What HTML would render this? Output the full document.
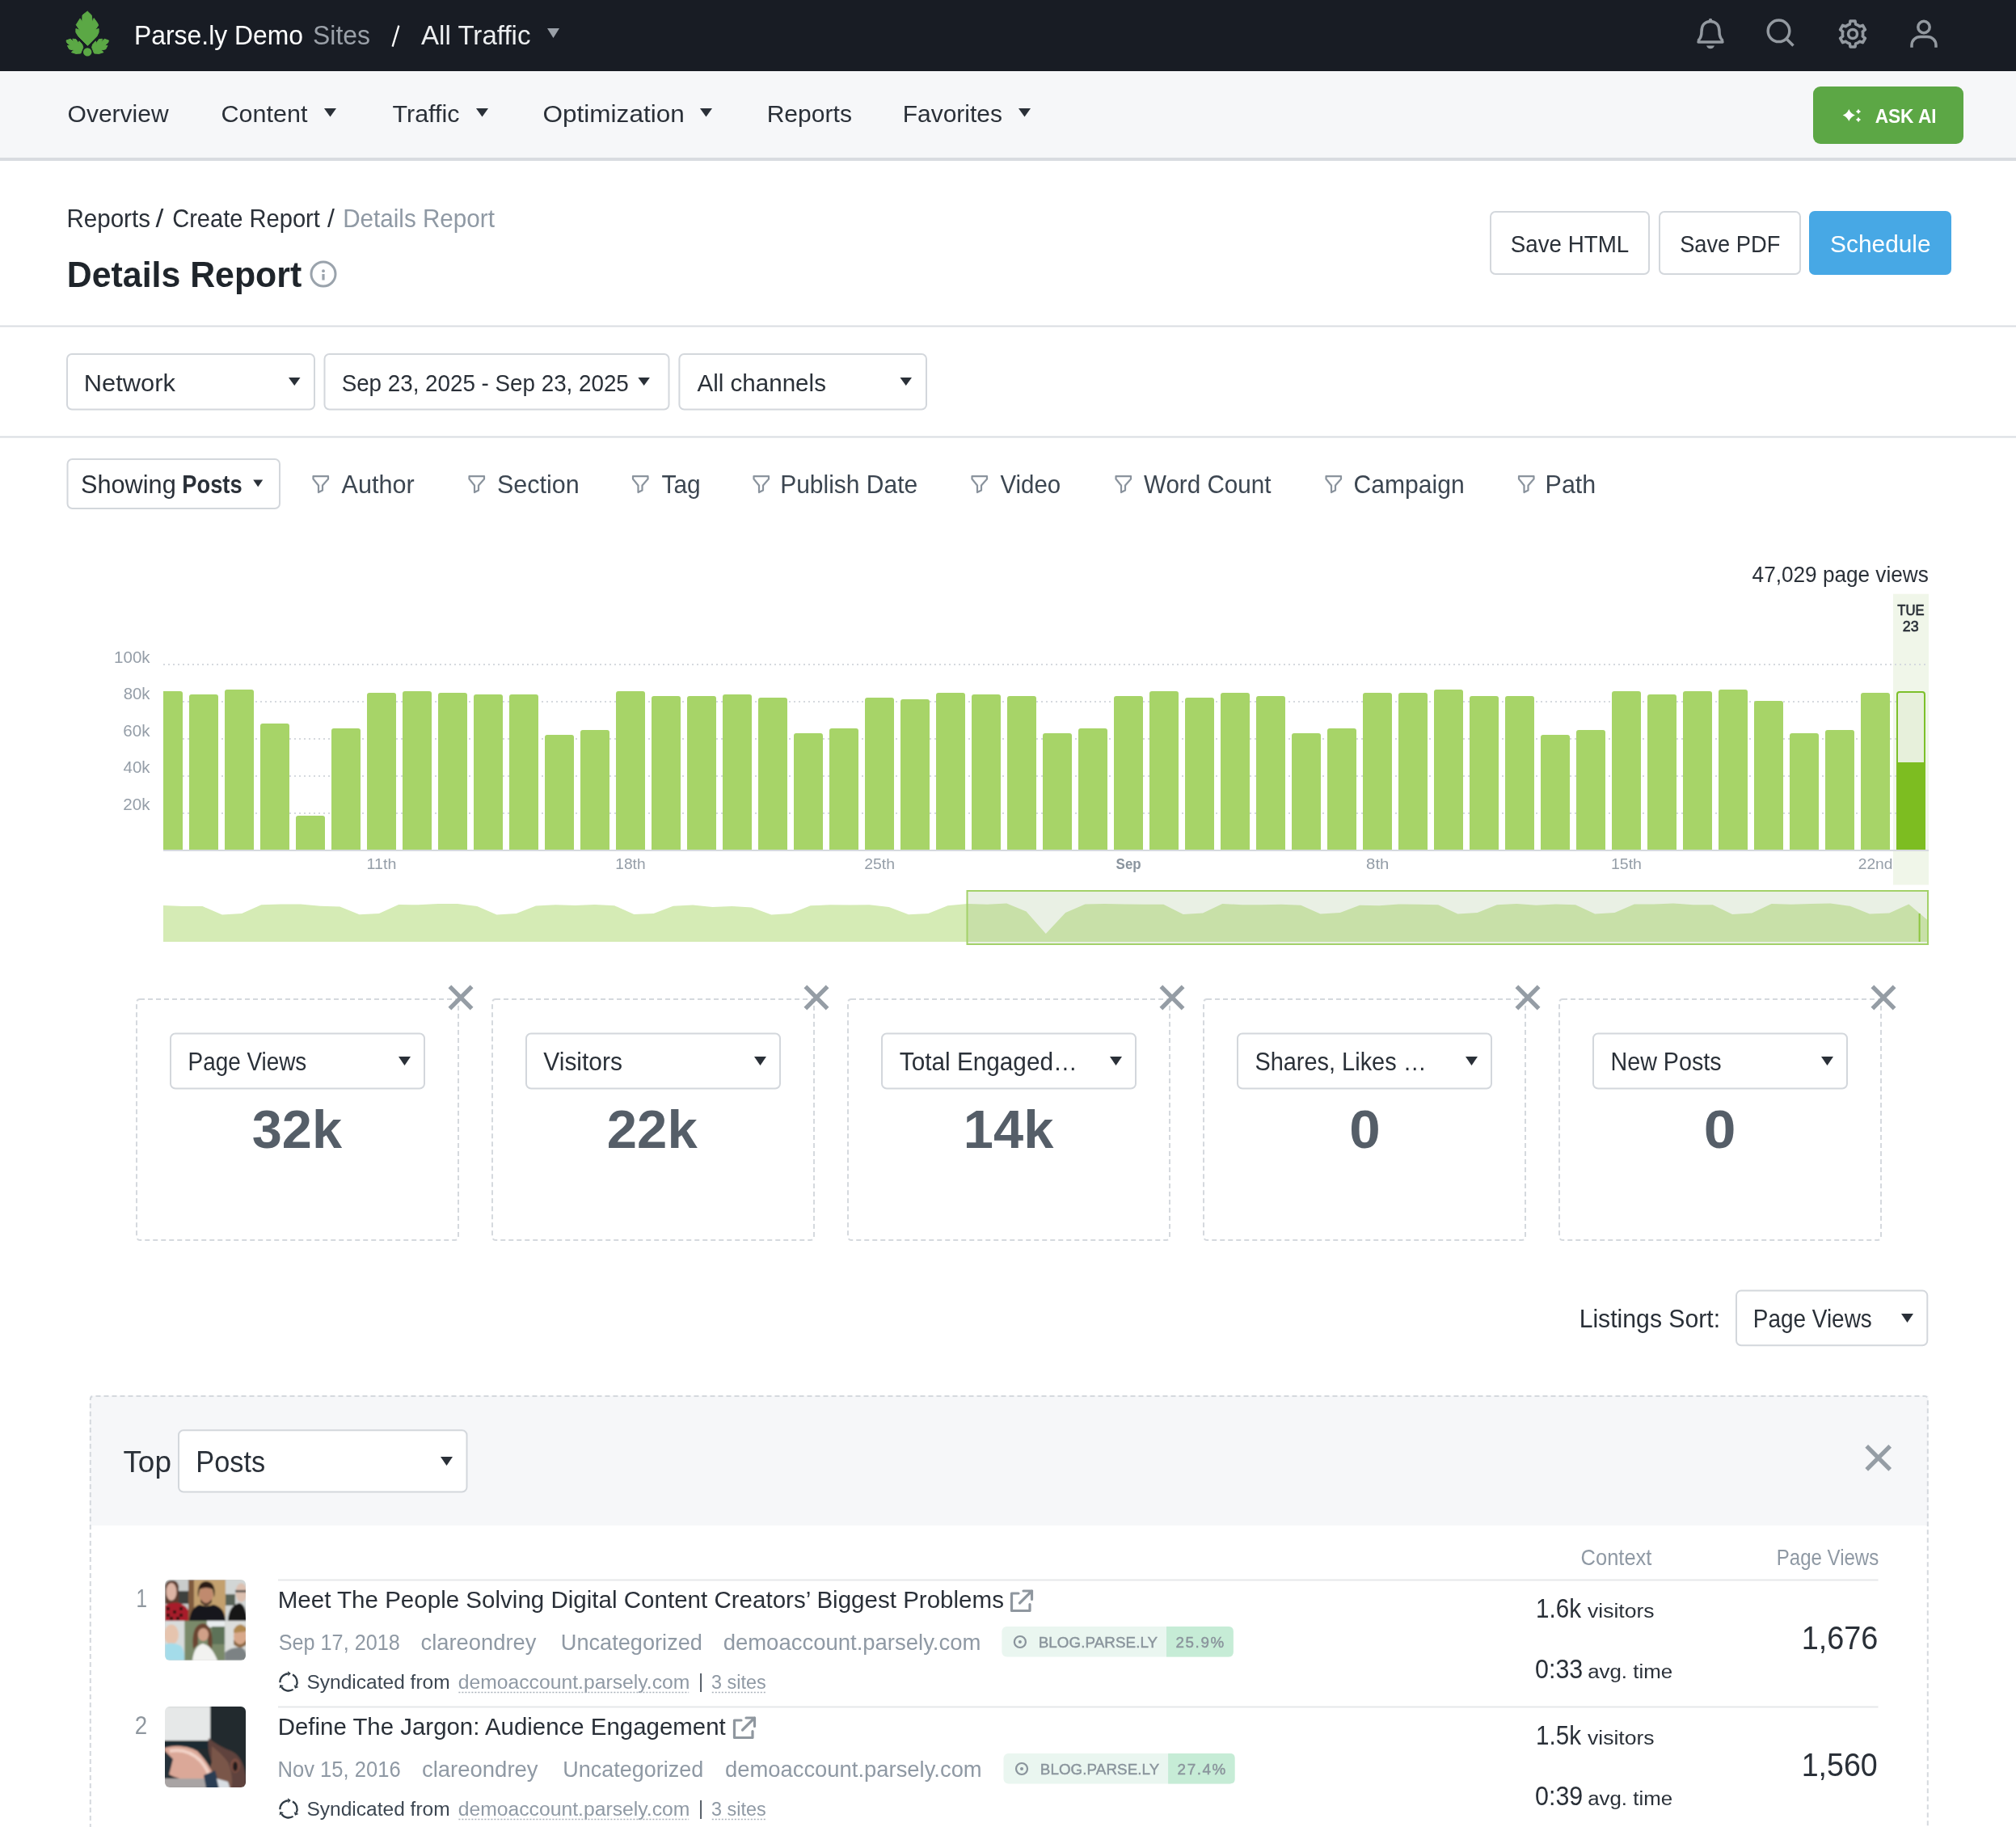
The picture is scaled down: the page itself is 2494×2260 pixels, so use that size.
<!DOCTYPE html>
<html><head><meta charset="utf-8"><title>Details Report</title>
<style>html,body{margin:0;padding:0;background:#fff;} body{width:2494px;height:2260px;overflow:hidden;font-family:"Liberation Sans",sans-serif;} svg{display:block;will-change:transform;} text{white-space:pre;}</style>
</head><body>
<svg width="2494" height="2260" viewBox="0 0 2494 2260">
<rect x="0" y="0" width="2494" height="88" fill="#181c24" />
<polygon points="108.2,13.9 113.2,18.8 114.3,27.3 116.2,22.5 120.7,28.8 121.6,31.4 117.7,37.0 122.1,35.5 122.1,40.0 119.9,44.8 108.4,56.4 96.8,44.8 93.9,40.0 93.9,35.5 98.7,37.4 94.2,30.7 99.1,22.9 101.7,27.3 102.0,18.8" fill="#5ba845" stroke="#5ba845" stroke-width="1" stroke-linejoin="round"/>
<polygon points="82.0,50.0 87.2,48.2 91.3,52.3 89.8,48.2 93.9,48.6 97.2,53.4 98.0,50.8 101.7,54.9 102.8,58.6 99.8,66.0 93.9,66.4 88.3,64.6 91.6,62.3 85.7,60.8 83.4,56.4 87.2,56.7 82.7,52.7" fill="#5ba845" stroke="#5ba845" stroke-width="1" stroke-linejoin="round"/>
<polygon points="134.4,50.0 129.2,48.2 125.1,52.3 126.6,48.2 122.5,48.6 119.2,53.4 118.4,50.8 114.7,54.9 113.6,58.6 116.6,66.0 122.5,66.4 128.1,64.6 124.8,62.3 130.7,60.8 133.0,56.4 129.2,56.7 133.7,52.7" fill="#5ba845" stroke="#5ba845" stroke-width="1" stroke-linejoin="round"/>
<circle cx="108.2" cy="64.4" r="5.2" fill="#5ba845"/>
<text x="166.01" y="55" font-family="Liberation Sans" font-size="33.42" font-weight="400" fill="#ffffff" textLength="209.08" lengthAdjust="spacingAndGlyphs" >Parse.ly Demo</text>
<text x="387.00" y="55" font-family="Liberation Sans" font-size="34.13" font-weight="400" fill="#9aa0a8" textLength="71.00" lengthAdjust="spacingAndGlyphs" >Sites</text>
<line x1="485.6" y1="57.6" x2="493.4" y2="31.6" stroke="#ffffff" stroke-width="2.3"/>
<text x="521.00" y="55" font-family="Liberation Sans" font-size="34.13" font-weight="400" fill="#eceef0" textLength="135.51" lengthAdjust="spacingAndGlyphs" >All Traffic</text>
<polygon points="677,35 692,35 684.5,47" fill="#9aa0a8"/>
<path d="M2101,52 L2131,52 M2101.5,52 L2101.5,49.5 C2104,47 2105,45 2105,39 C2105,31 2109.5,26.5 2116,26.5 C2122.5,26.5 2127,31 2127,39 C2127,45 2128,47 2130.5,49.5 L2130.5,52" fill="none" stroke="#9399a0" stroke-width="3.5" stroke-linejoin="round" stroke-linecap="round"/>
<circle cx="2116" cy="25" r="2.2" fill="#9399a0"/>
<path d="M2111,56.5 L2121,56.5 C2120,59.2 2118,60.3 2116,60.3 C2114,60.3 2112,59.2 2111,56.5Z" fill="#9399a0"/>
<circle cx="2200.5" cy="38.3" r="13.3" fill="none" stroke="#9399a0" stroke-width="3.5"/>
<line x1="2210" y1="48" x2="2218.5" y2="56.5" stroke="#9399a0" stroke-width="3.5" stroke-linecap="butt"/>
<path d="M2288.32,29.95 L2289.03,25.97 L2294.97,25.97 L2295.68,29.95 A12.6,12.6 0 0 1 2300.59,32.78 L2304.39,31.41 L2307.37,36.56 L2304.28,39.17 A12.6,12.6 0 0 1 2304.28,44.83 L2307.37,47.44 L2304.39,52.59 L2300.59,51.22 A12.6,12.6 0 0 1 2295.68,54.05 L2294.97,58.03 L2289.03,58.03 L2288.32,54.05 A12.6,12.6 0 0 1 2283.41,51.22 L2279.61,52.59 L2276.63,47.44 L2279.72,44.83 A12.6,12.6 0 0 1 2279.72,39.17 L2276.63,36.56 L2279.61,31.41 L2283.41,32.78 A12.6,12.6 0 0 1 2288.32,29.95Z" fill="none" stroke="#9399a0" stroke-width="3.6" stroke-linejoin="round"/>
<circle cx="2292" cy="42" r="5.5" fill="none" stroke="#9399a0" stroke-width="3.5"/>
<circle cx="2380" cy="33.5" r="7.2" fill="none" stroke="#9399a0" stroke-width="3.5"/>
<path d="M2365,58.8 L2365,56 C2365,50 2369.5,45.6 2376,45.6 L2384,45.6 C2390.5,45.6 2395,50 2395,56 L2395,58.8" fill="none" stroke="#9399a0" stroke-width="3.5"/>
<rect x="0" y="88" width="2494" height="107" fill="#f6f7f9" />
<rect x="0" y="195" width="2494" height="4" fill="#d9dce0" />
<text x="83.59" y="151" font-family="Liberation Sans" font-size="29.87" font-weight="400" fill="#2a3038" textLength="125.04" lengthAdjust="spacingAndGlyphs" >Overview</text>
<text x="273.57" y="151" font-family="Liberation Sans" font-size="29.87" font-weight="400" fill="#2a3038" textLength="106.83" lengthAdjust="spacingAndGlyphs" >Content</text>
<polygon points="401,134 416,134 408.5,144.5" fill="#2a3038"/>
<text x="485.52" y="151" font-family="Liberation Sans" font-size="29.87" font-weight="400" fill="#2a3038" textLength="82.95" lengthAdjust="spacingAndGlyphs" >Traffic</text>
<polygon points="589,134 604,134 596.5,144.5" fill="#2a3038"/>
<text x="671.52" y="151" font-family="Liberation Sans" font-size="29.87" font-weight="400" fill="#2a3038" textLength="175.25" lengthAdjust="spacingAndGlyphs" >Optimization</text>
<polygon points="866,134 881,134 873.5,144.5" fill="#2a3038"/>
<text x="948.65" y="151" font-family="Liberation Sans" font-size="29.87" font-weight="400" fill="#2a3038" textLength="105.29" lengthAdjust="spacingAndGlyphs" >Reports</text>
<text x="1116.66" y="151" font-family="Liberation Sans" font-size="29.87" font-weight="400" fill="#2a3038" textLength="123.28" lengthAdjust="spacingAndGlyphs" >Favorites</text>
<polygon points="1260,134 1275,134 1267.5,144.5" fill="#2a3038"/>
<rect x="2243" y="107" width="186" height="71" fill="#5ca745" rx="9" />
<path d="M2287.3,134.9 Q2289.4280000000003,140.372 2294.9,142.5 Q2289.4280000000003,144.628 2287.3,150.1 Q2285.172,144.628 2279.7000000000003,142.5 Q2285.172,140.372 2287.3,134.9Z" fill="#fff"/>
<path d="M2299,134.70000000000002 Q2299.896,137.00400000000002 2302.2,137.9 Q2299.896,138.796 2299,141.1 Q2298.104,138.796 2295.8,137.9 Q2298.104,137.00400000000002 2299,134.70000000000002Z" fill="#fff"/>
<path d="M2299,144.8 Q2299.896,147.104 2302.2,148 Q2299.896,148.896 2299,151.2 Q2298.104,148.896 2295.8,148 Q2298.104,147.104 2299,144.8Z" fill="#fff"/>
<text x="2319.65" y="152" font-family="Liberation Sans" font-size="24.18" font-weight="700" fill="#ffffff" textLength="75.97" lengthAdjust="spacingAndGlyphs" >ASK AI</text>
<text x="82.44" y="280.5" font-family="Liberation Sans" font-size="30.44" font-weight="400" fill="#2a3038" textLength="103.48" lengthAdjust="spacingAndGlyphs" >Reports</text>
<text x="192.50" y="280.5" font-family="Liberation Sans" font-size="30.44" font-weight="400" fill="#2a3038" textLength="9.88" lengthAdjust="spacingAndGlyphs" >/</text>
<text x="213.14" y="280.5" font-family="Liberation Sans" font-size="30.44" font-weight="400" fill="#2a3038" textLength="182.76" lengthAdjust="spacingAndGlyphs" >Create Report</text>
<text x="405.00" y="280.5" font-family="Liberation Sans" font-size="30.44" font-weight="400" fill="#2a3038" textLength="8.89" lengthAdjust="spacingAndGlyphs" >/</text>
<text x="424.19" y="280.5" font-family="Liberation Sans" font-size="30.44" font-weight="400" fill="#8f99a4" textLength="187.71" lengthAdjust="spacingAndGlyphs" >Details Report</text>
<text x="82.82" y="354.8" font-family="Liberation Sans" font-size="44.80" font-weight="700" fill="#1f252b" textLength="290.39" lengthAdjust="spacingAndGlyphs" >Details Report</text>
<circle cx="400" cy="339" r="15" fill="none" stroke="#9aa3ac" stroke-width="3"/>
<rect x="398.4" y="339" width="3.2" height="7.5" fill="#9aa3ac"/>
<circle cx="400" cy="335.2" r="1.9" fill="#9aa3ac"/>
<rect x="1844" y="262" width="196" height="77" fill="#fff" rx="6" stroke="#d3d7dc" stroke-width="2" />
<text x="1868.73" y="312" font-family="Liberation Sans" font-size="29.87" font-weight="400" fill="#2a3038" textLength="146.56" lengthAdjust="spacingAndGlyphs" >Save HTML</text>
<rect x="2053" y="262" width="174" height="77" fill="#fff" rx="6" stroke="#d3d7dc" stroke-width="2" />
<text x="2078.15" y="312" font-family="Liberation Sans" font-size="29.87" font-weight="400" fill="#2a3038" textLength="124.24" lengthAdjust="spacingAndGlyphs" >Save PDF</text>
<rect x="2238" y="261" width="176" height="79" fill="#47a8e5" rx="7" />
<text x="2264.07" y="312" font-family="Liberation Sans" font-size="29.87" font-weight="400" fill="#ffffff" textLength="124.54" lengthAdjust="spacingAndGlyphs" >Schedule</text>
<rect x="0" y="402.5" width="2494" height="2" fill="#d9dde2" />
<rect x="83" y="438" width="306" height="68.5" fill="#fff" rx="6" stroke="#d3d7dc" stroke-width="2" />
<polygon points="357,467 371.5,467 364.25,477" fill="#2a3038"/>
<text x="103.79" y="484" font-family="Liberation Sans" font-size="30.15" font-weight="400" fill="#2a3038" textLength="113.23" lengthAdjust="spacingAndGlyphs" >Network</text>
<rect x="401.5" y="438" width="426.0" height="68.5" fill="#fff" rx="6" stroke="#d3d7dc" stroke-width="2" />
<polygon points="789.4,467 803.9,467 796.65,477" fill="#2a3038"/>
<text x="422.63" y="484" font-family="Liberation Sans" font-size="30.15" font-weight="400" fill="#2a3038" textLength="355.19" lengthAdjust="spacingAndGlyphs" >Sep 23, 2025 - Sep 23, 2025</text>
<rect x="840.4" y="438" width="305.6" height="68.5" fill="#fff" rx="6" stroke="#d3d7dc" stroke-width="2" />
<polygon points="1113.5,467 1128.0,467 1120.75,477" fill="#2a3038"/>
<text x="862.50" y="484" font-family="Liberation Sans" font-size="30.15" font-weight="400" fill="#2a3038" textLength="159.42" lengthAdjust="spacingAndGlyphs" >All channels</text>
<rect x="0" y="539.5" width="2494" height="2" fill="#d9dde2" />
<rect x="83.5" y="568" width="262.5" height="61" fill="#fff" rx="6" stroke="#d3d7dc" stroke-width="2" />
<polygon points="313.2,593.6 325.2,593.6 319.2,602.2" fill="#2a3038"/>
<text x="100.04" y="610.3" font-family="Liberation Sans" font-size="30.72" font-weight="400" fill="#2a3038" textLength="117.68" lengthAdjust="spacingAndGlyphs" >Showing</text>
<text x="225.29" y="610.3" font-family="Liberation Sans" font-size="30.72" font-weight="700" fill="#2a3038" textLength="74.31" lengthAdjust="spacingAndGlyphs" >Posts</text>
<path d="M387.5,589.2 L406,589.2 L406,592.5 L399,600.5 L399,606.5 L394,609 L394,600.5 L387.5,592.5 Z" fill="none" stroke="#8a939d" stroke-width="2.2" stroke-linejoin="round"/>
<text x="422.50" y="610.3" font-family="Liberation Sans" font-size="30.72" font-weight="400" fill="#3c4651" textLength="90.15" lengthAdjust="spacingAndGlyphs" >Author</text>
<path d="M580.5,589.2 L599,589.2 L599,592.5 L592,600.5 L592,606.5 L587,609 L587,600.5 L580.5,592.5 Z" fill="none" stroke="#8a939d" stroke-width="2.2" stroke-linejoin="round"/>
<text x="615.05" y="610.3" font-family="Liberation Sans" font-size="30.72" font-weight="400" fill="#3c4651" textLength="101.66" lengthAdjust="spacingAndGlyphs" >Section</text>
<path d="M783.0,589.2 L801.5,589.2 L801.5,592.5 L794.5,600.5 L794.5,606.5 L789.5,609 L789.5,600.5 L783.0,592.5 Z" fill="none" stroke="#8a939d" stroke-width="2.2" stroke-linejoin="round"/>
<text x="818.53" y="610.3" font-family="Liberation Sans" font-size="30.72" font-weight="400" fill="#3c4651" textLength="48.14" lengthAdjust="spacingAndGlyphs" >Tag</text>
<path d="M932.5,589.2 L951,589.2 L951,592.5 L944,600.5 L944,606.5 L939,609 L939,600.5 L932.5,592.5 Z" fill="none" stroke="#8a939d" stroke-width="2.2" stroke-linejoin="round"/>
<text x="965.16" y="610.3" font-family="Liberation Sans" font-size="30.72" font-weight="400" fill="#3c4651" textLength="170.06" lengthAdjust="spacingAndGlyphs" >Publish Date</text>
<path d="M1202.5,589.2 L1221,589.2 L1221,592.5 L1214,600.5 L1214,606.5 L1209,609 L1209,600.5 L1202.5,592.5 Z" fill="none" stroke="#8a939d" stroke-width="2.2" stroke-linejoin="round"/>
<text x="1237.50" y="610.3" font-family="Liberation Sans" font-size="30.72" font-weight="400" fill="#3c4651" textLength="74.69" lengthAdjust="spacingAndGlyphs" >Video</text>
<path d="M1380.5,589.2 L1399,589.2 L1399,592.5 L1392,600.5 L1392,606.5 L1387,609 L1387,600.5 L1380.5,592.5 Z" fill="none" stroke="#8a939d" stroke-width="2.2" stroke-linejoin="round"/>
<text x="1415.00" y="610.3" font-family="Liberation Sans" font-size="30.72" font-weight="400" fill="#3c4651" textLength="157.40" lengthAdjust="spacingAndGlyphs" >Word Count</text>
<path d="M1640.5,589.2 L1659,589.2 L1659,592.5 L1652,600.5 L1652,606.5 L1647,609 L1647,600.5 L1640.5,592.5 Z" fill="none" stroke="#8a939d" stroke-width="2.2" stroke-linejoin="round"/>
<text x="1674.59" y="610.3" font-family="Liberation Sans" font-size="30.72" font-weight="400" fill="#3c4651" textLength="137.10" lengthAdjust="spacingAndGlyphs" >Campaign</text>
<path d="M1879.0,589.2 L1897.5,589.2 L1897.5,592.5 L1890.5,600.5 L1890.5,606.5 L1885.5,609 L1885.5,600.5 L1879.0,592.5 Z" fill="none" stroke="#8a939d" stroke-width="2.2" stroke-linejoin="round"/>
<text x="1911.62" y="610.3" font-family="Liberation Sans" font-size="30.72" font-weight="400" fill="#3c4651" textLength="62.59" lengthAdjust="spacingAndGlyphs" >Path</text>
<text x="2167.59" y="719.9" font-family="Liberation Sans" font-size="27.02" font-weight="400" fill="#2a3038" textLength="218.23" lengthAdjust="spacingAndGlyphs" >47,029 page views</text>
<rect x="2342" y="734.7" width="44" height="359.8" fill="#f0f6e9" />
<text x="2347.34" y="761" font-family="Liberation Sans" font-size="18.77" font-weight="400" fill="#2a3038" textLength="33.36" lengthAdjust="spacingAndGlyphs" stroke="#2a3038" stroke-width="0.6">TUE</text>
<text x="2353.86" y="781" font-family="Liberation Sans" font-size="18.77" font-weight="400" fill="#2a3038" textLength="19.86" lengthAdjust="spacingAndGlyphs" stroke="#2a3038" stroke-width="0.6">23</text>
<line x1="202" y1="822" x2="2386" y2="822" stroke="#d5d9de" stroke-width="2" stroke-dasharray="2 4"/>
<line x1="202" y1="868" x2="2386" y2="868" stroke="#d5d9de" stroke-width="2" stroke-dasharray="2 4"/>
<line x1="202" y1="914" x2="2386" y2="914" stroke="#d5d9de" stroke-width="2" stroke-dasharray="2 4"/>
<line x1="202" y1="960" x2="2386" y2="960" stroke="#d5d9de" stroke-width="2" stroke-dasharray="2 4"/>
<line x1="202" y1="1006" x2="2386" y2="1006" stroke="#d5d9de" stroke-width="2" stroke-dasharray="2 4"/>
<text x="141.12" y="820.1" font-family="Liberation Sans" font-size="20.34" font-weight="400" fill="#959ea8" textLength="44.46" lengthAdjust="spacingAndGlyphs" >100k</text>
<text x="152.66" y="864.8" font-family="Liberation Sans" font-size="20.34" font-weight="400" fill="#959ea8" textLength="32.92" lengthAdjust="spacingAndGlyphs" >80k</text>
<text x="152.33" y="910.9" font-family="Liberation Sans" font-size="20.34" font-weight="400" fill="#959ea8" textLength="33.24" lengthAdjust="spacingAndGlyphs" >60k</text>
<text x="152.48" y="956.1" font-family="Liberation Sans" font-size="20.34" font-weight="400" fill="#959ea8" textLength="33.10" lengthAdjust="spacingAndGlyphs" >40k</text>
<text x="152.33" y="1001.7" font-family="Liberation Sans" font-size="20.34" font-weight="400" fill="#959ea8" textLength="33.24" lengthAdjust="spacingAndGlyphs" >20k</text>
<path d="M202,1051 L202,855 L223,855 Q226,855 226,858 L226,1051 Z" fill="#a7d468"/>
<path d="M234,1051 L234,862 Q234,859 237,859 L267,859 Q270,859 270,862 L270,1051 Z" fill="#a7d468"/>
<path d="M278,1051 L278,856 Q278,853 281,853 L311,853 Q314,853 314,856 L314,1051 Z" fill="#a7d468"/>
<path d="M322,1051 L322,898 Q322,895 325,895 L355,895 Q358,895 358,898 L358,1051 Z" fill="#a7d468"/>
<path d="M366,1051 L366,1012 Q366,1009 369,1009 L399,1009 Q402,1009 402,1012 L402,1051 Z" fill="#a7d468"/>
<path d="M410,1051 L410,904 Q410,901 413,901 L443,901 Q446,901 446,904 L446,1051 Z" fill="#a7d468"/>
<path d="M454,1051 L454,860 Q454,857 457,857 L487,857 Q490,857 490,860 L490,1051 Z" fill="#a7d468"/>
<path d="M498,1051 L498,858 Q498,855 501,855 L531,855 Q534,855 534,858 L534,1051 Z" fill="#a7d468"/>
<path d="M542,1051 L542,860 Q542,857 545,857 L575,857 Q578,857 578,860 L578,1051 Z" fill="#a7d468"/>
<path d="M586,1051 L586,862 Q586,859 589,859 L619,859 Q622,859 622,862 L622,1051 Z" fill="#a7d468"/>
<path d="M630,1051 L630,862 Q630,859 633,859 L663,859 Q666,859 666,862 L666,1051 Z" fill="#a7d468"/>
<path d="M674,1051 L674,912 Q674,909 677,909 L707,909 Q710,909 710,912 L710,1051 Z" fill="#a7d468"/>
<path d="M718,1051 L718,906 Q718,903 721,903 L751,903 Q754,903 754,906 L754,1051 Z" fill="#a7d468"/>
<path d="M762,1051 L762,858 Q762,855 765,855 L795,855 Q798,855 798,858 L798,1051 Z" fill="#a7d468"/>
<path d="M806,1051 L806,864 Q806,861 809,861 L839,861 Q842,861 842,864 L842,1051 Z" fill="#a7d468"/>
<path d="M850,1051 L850,864 Q850,861 853,861 L883,861 Q886,861 886,864 L886,1051 Z" fill="#a7d468"/>
<path d="M894,1051 L894,862 Q894,859 897,859 L927,859 Q930,859 930,862 L930,1051 Z" fill="#a7d468"/>
<path d="M938,1051 L938,866 Q938,863 941,863 L971,863 Q974,863 974,866 L974,1051 Z" fill="#a7d468"/>
<path d="M982,1051 L982,910 Q982,907 985,907 L1015,907 Q1018,907 1018,910 L1018,1051 Z" fill="#a7d468"/>
<path d="M1026,1051 L1026,904 Q1026,901 1029,901 L1059,901 Q1062,901 1062,904 L1062,1051 Z" fill="#a7d468"/>
<path d="M1070,1051 L1070,866 Q1070,863 1073,863 L1103,863 Q1106,863 1106,866 L1106,1051 Z" fill="#a7d468"/>
<path d="M1114,1051 L1114,868 Q1114,865 1117,865 L1147,865 Q1150,865 1150,868 L1150,1051 Z" fill="#a7d468"/>
<path d="M1158,1051 L1158,860 Q1158,857 1161,857 L1191,857 Q1194,857 1194,860 L1194,1051 Z" fill="#a7d468"/>
<path d="M1202,1051 L1202,862 Q1202,859 1205,859 L1235,859 Q1238,859 1238,862 L1238,1051 Z" fill="#a7d468"/>
<path d="M1246,1051 L1246,864 Q1246,861 1249,861 L1279,861 Q1282,861 1282,864 L1282,1051 Z" fill="#a7d468"/>
<path d="M1290,1051 L1290,910 Q1290,907 1293,907 L1323,907 Q1326,907 1326,910 L1326,1051 Z" fill="#a7d468"/>
<path d="M1334,1051 L1334,904 Q1334,901 1337,901 L1367,901 Q1370,901 1370,904 L1370,1051 Z" fill="#a7d468"/>
<path d="M1378,1051 L1378,864 Q1378,861 1381,861 L1411,861 Q1414,861 1414,864 L1414,1051 Z" fill="#a7d468"/>
<path d="M1422,1051 L1422,858 Q1422,855 1425,855 L1455,855 Q1458,855 1458,858 L1458,1051 Z" fill="#a7d468"/>
<path d="M1466,1051 L1466,866 Q1466,863 1469,863 L1499,863 Q1502,863 1502,866 L1502,1051 Z" fill="#a7d468"/>
<path d="M1510,1051 L1510,860 Q1510,857 1513,857 L1543,857 Q1546,857 1546,860 L1546,1051 Z" fill="#a7d468"/>
<path d="M1554,1051 L1554,864 Q1554,861 1557,861 L1587,861 Q1590,861 1590,864 L1590,1051 Z" fill="#a7d468"/>
<path d="M1598,1051 L1598,910 Q1598,907 1601,907 L1631,907 Q1634,907 1634,910 L1634,1051 Z" fill="#a7d468"/>
<path d="M1642,1051 L1642,904 Q1642,901 1645,901 L1675,901 Q1678,901 1678,904 L1678,1051 Z" fill="#a7d468"/>
<path d="M1686,1051 L1686,860 Q1686,857 1689,857 L1719,857 Q1722,857 1722,860 L1722,1051 Z" fill="#a7d468"/>
<path d="M1730,1051 L1730,860 Q1730,857 1733,857 L1763,857 Q1766,857 1766,860 L1766,1051 Z" fill="#a7d468"/>
<path d="M1774,1051 L1774,856 Q1774,853 1777,853 L1807,853 Q1810,853 1810,856 L1810,1051 Z" fill="#a7d468"/>
<path d="M1818,1051 L1818,864 Q1818,861 1821,861 L1851,861 Q1854,861 1854,864 L1854,1051 Z" fill="#a7d468"/>
<path d="M1862,1051 L1862,864 Q1862,861 1865,861 L1895,861 Q1898,861 1898,864 L1898,1051 Z" fill="#a7d468"/>
<path d="M1906,1051 L1906,912 Q1906,909 1909,909 L1939,909 Q1942,909 1942,912 L1942,1051 Z" fill="#a7d468"/>
<path d="M1950,1051 L1950,906 Q1950,903 1953,903 L1983,903 Q1986,903 1986,906 L1986,1051 Z" fill="#a7d468"/>
<path d="M1994,1051 L1994,858 Q1994,855 1997,855 L2027,855 Q2030,855 2030,858 L2030,1051 Z" fill="#a7d468"/>
<path d="M2038,1051 L2038,862 Q2038,859 2041,859 L2071,859 Q2074,859 2074,862 L2074,1051 Z" fill="#a7d468"/>
<path d="M2082,1051 L2082,858 Q2082,855 2085,855 L2115,855 Q2118,855 2118,858 L2118,1051 Z" fill="#a7d468"/>
<path d="M2126,1051 L2126,856 Q2126,853 2129,853 L2159,853 Q2162,853 2162,856 L2162,1051 Z" fill="#a7d468"/>
<path d="M2170,1051 L2170,870 Q2170,867 2173,867 L2203,867 Q2206,867 2206,870 L2206,1051 Z" fill="#a7d468"/>
<path d="M2214,1051 L2214,910 Q2214,907 2217,907 L2247,907 Q2250,907 2250,910 L2250,1051 Z" fill="#a7d468"/>
<path d="M2258,1051 L2258,906 Q2258,903 2261,903 L2291,903 Q2294,903 2294,906 L2294,1051 Z" fill="#a7d468"/>
<path d="M2302,1051 L2302,860 Q2302,857 2305,857 L2335,857 Q2338,857 2338,860 L2338,1051 Z" fill="#a7d468"/>
<path d="M2347,1051 L2347,859 Q2347,856 2350,856 L2378,856 Q2381,856 2381,859 L2381,1051 Z" fill="#e7f0db" stroke="#7cc02a" stroke-width="2"/>
<rect x="2346" y="943" width="36" height="108" fill="#7dbd21" />
<rect x="202" y="1051" width="2184" height="2" fill="#d5d9de" />
<text x="453.52" y="1075" font-family="Liberation Sans" font-size="18.49" font-weight="400" fill="#959ea8" textLength="36.83" lengthAdjust="spacingAndGlyphs" >11th</text>
<text x="761.30" y="1075" font-family="Liberation Sans" font-size="18.49" font-weight="400" fill="#959ea8" textLength="37.27" lengthAdjust="spacingAndGlyphs" >18th</text>
<text x="1069.22" y="1075" font-family="Liberation Sans" font-size="18.49" font-weight="400" fill="#959ea8" textLength="37.75" lengthAdjust="spacingAndGlyphs" >25th</text>
<text x="1380.61" y="1075" font-family="Liberation Sans" font-size="18.49" font-weight="700" fill="#8a949e" textLength="31.07" lengthAdjust="spacingAndGlyphs" >Sep</text>
<text x="1690.11" y="1075" font-family="Liberation Sans" font-size="18.49" font-weight="400" fill="#959ea8" textLength="28.28" lengthAdjust="spacingAndGlyphs" >8th</text>
<text x="1992.93" y="1075" font-family="Liberation Sans" font-size="18.49" font-weight="400" fill="#959ea8" textLength="38.02" lengthAdjust="spacingAndGlyphs" >15th</text>
<text x="2298.75" y="1075" font-family="Liberation Sans" font-size="18.49" font-weight="400" fill="#959ea8" textLength="42.68" lengthAdjust="spacingAndGlyphs" >22nd</text>
<defs><clipPath id="selc"><rect x="1196.5" y="1102" width="1188.5" height="66"/></clipPath><clipPath id="outc"><rect x="0" y="1090" width="1196.5" height="90"/></clipPath></defs>
<polygon points="202,1165 202.0,1119.9 226.3,1121.0 250.5,1121.0 274.8,1131.5 299.1,1130.0 323.3,1119.3 347.6,1118.4 371.8,1118.4 396.1,1120.8 420.4,1121.4 444.6,1131.2 468.9,1130.0 493.2,1119.0 517.4,1119.3 541.7,1118.0 566.0,1118.0 590.2,1121.0 614.5,1131.5 638.7,1130.0 663.0,1120.5 687.3,1119.3 711.5,1120.0 735.8,1119.0 760.1,1120.2 784.3,1131.0 808.6,1130.0 832.8,1120.8 857.1,1119.6 881.4,1122.0 905.6,1121.0 929.9,1122.6 954.2,1131.5 978.4,1130.0 1002.7,1120.2 1027.0,1119.3 1051.2,1119.6 1075.5,1119.3 1099.7,1122.0 1124.0,1131.2 1148.3,1130.0 1172.5,1120.2 1196.8,1117.9 1221.1,1118.8 1245.3,1117.4 1269.6,1127.5 1293.8,1154.9 1318.1,1128.9 1342.4,1118.4 1366.6,1117.9 1390.9,1118.4 1415.2,1118.8 1439.4,1118.8 1463.7,1130.9 1488.0,1129.4 1512.2,1117.9 1536.5,1119.3 1560.7,1119.3 1585.0,1118.8 1609.3,1119.8 1633.5,1130.4 1657.8,1128.9 1682.1,1119.8 1706.3,1120.3 1730.6,1118.4 1754.9,1118.8 1779.1,1119.3 1803.4,1130.4 1827.6,1128.9 1851.9,1119.3 1876.2,1117.9 1900.4,1119.8 1924.7,1118.4 1949.0,1119.3 1973.2,1130.4 1997.5,1128.9 2021.8,1118.4 2046.0,1118.4 2070.3,1117.4 2094.5,1119.3 2118.8,1119.3 2143.1,1130.9 2167.3,1129.4 2191.6,1117.9 2215.9,1118.8 2240.1,1117.9 2264.4,1117.4 2288.6,1120.8 2312.9,1130.4 2337.2,1129.4 2361.4,1118.4 2385.7,1139.0 2385.7,1165" fill="#d5ebb5" clip-path="url(#outc)"/>
<rect x="1196.5" y="1102" width="1188.5" height="66" fill="#e9f0e4" />
<polygon points="202,1165 202.0,1119.9 226.3,1121.0 250.5,1121.0 274.8,1131.5 299.1,1130.0 323.3,1119.3 347.6,1118.4 371.8,1118.4 396.1,1120.8 420.4,1121.4 444.6,1131.2 468.9,1130.0 493.2,1119.0 517.4,1119.3 541.7,1118.0 566.0,1118.0 590.2,1121.0 614.5,1131.5 638.7,1130.0 663.0,1120.5 687.3,1119.3 711.5,1120.0 735.8,1119.0 760.1,1120.2 784.3,1131.0 808.6,1130.0 832.8,1120.8 857.1,1119.6 881.4,1122.0 905.6,1121.0 929.9,1122.6 954.2,1131.5 978.4,1130.0 1002.7,1120.2 1027.0,1119.3 1051.2,1119.6 1075.5,1119.3 1099.7,1122.0 1124.0,1131.2 1148.3,1130.0 1172.5,1120.2 1196.8,1117.9 1221.1,1118.8 1245.3,1117.4 1269.6,1127.5 1293.8,1154.9 1318.1,1128.9 1342.4,1118.4 1366.6,1117.9 1390.9,1118.4 1415.2,1118.8 1439.4,1118.8 1463.7,1130.9 1488.0,1129.4 1512.2,1117.9 1536.5,1119.3 1560.7,1119.3 1585.0,1118.8 1609.3,1119.8 1633.5,1130.4 1657.8,1128.9 1682.1,1119.8 1706.3,1120.3 1730.6,1118.4 1754.9,1118.8 1779.1,1119.3 1803.4,1130.4 1827.6,1128.9 1851.9,1119.3 1876.2,1117.9 1900.4,1119.8 1924.7,1118.4 1949.0,1119.3 1973.2,1130.4 1997.5,1128.9 2021.8,1118.4 2046.0,1118.4 2070.3,1117.4 2094.5,1119.3 2118.8,1119.3 2143.1,1130.9 2167.3,1129.4 2191.6,1117.9 2215.9,1118.8 2240.1,1117.9 2264.4,1117.4 2288.6,1120.8 2312.9,1130.4 2337.2,1129.4 2361.4,1118.4 2385.7,1139.0 2385.7,1165" fill="#c8e0a8" clip-path="url(#selc)"/>
<rect x="1196.5" y="1102" width="1188.5" height="66" fill="none" stroke="#a3d16a" stroke-width="2" />
<rect x="2373.6" y="1130" width="2" height="35" fill="#8cc63f" />
<rect x="169" y="1236" width="398" height="298" fill="none" rx="4" stroke="#d5d9de" stroke-width="2" stroke-dasharray="6 4"/>
<rect x="211" y="1278.5" width="314" height="68.0" fill="#fff" rx="6" stroke="#d3d7dc" stroke-width="2" />
<polygon points="493,1307 508,1307 500.5,1318" fill="#2a3038"/>
<text x="232.62" y="1324.3" font-family="Liberation Sans" font-size="30.72" font-weight="400" fill="#2a3038" textLength="146.65" lengthAdjust="spacingAndGlyphs" >Page Views</text>
<text x="311.71" y="1420" font-family="Liberation Sans" font-size="66.84" font-weight="700" fill="#555e68" textLength="111.27" lengthAdjust="spacingAndGlyphs" >32k</text>
<path d="M556.4,1220.4 L583.6,1247.6 M583.6,1220.4 L556.4,1247.6" stroke="#959da5" stroke-width="5.4"/>
<rect x="609" y="1236" width="398" height="298" fill="none" rx="4" stroke="#d5d9de" stroke-width="2" stroke-dasharray="6 4"/>
<rect x="651" y="1278.5" width="314" height="68.0" fill="#fff" rx="6" stroke="#d3d7dc" stroke-width="2" />
<polygon points="933,1307 948,1307 940.5,1318" fill="#2a3038"/>
<text x="672.30" y="1324.3" font-family="Liberation Sans" font-size="30.72" font-weight="400" fill="#2a3038" textLength="97.64" lengthAdjust="spacingAndGlyphs" >Visitors</text>
<text x="750.80" y="1420" font-family="Liberation Sans" font-size="66.84" font-weight="700" fill="#555e68" textLength="111.87" lengthAdjust="spacingAndGlyphs" >22k</text>
<path d="M996.4,1220.4 L1023.6,1247.6 M1023.6,1220.4 L996.4,1247.6" stroke="#959da5" stroke-width="5.4"/>
<rect x="1049" y="1236" width="398" height="298" fill="none" rx="4" stroke="#d5d9de" stroke-width="2" stroke-dasharray="6 4"/>
<rect x="1091" y="1278.5" width="314" height="68.0" fill="#fff" rx="6" stroke="#d3d7dc" stroke-width="2" />
<polygon points="1373,1307 1388,1307 1380.5,1318" fill="#2a3038"/>
<text x="1112.84" y="1324.3" font-family="Liberation Sans" font-size="30.72" font-weight="400" fill="#2a3038" textLength="219.88" lengthAdjust="spacingAndGlyphs" >Total Engaged…</text>
<text x="1191.82" y="1420" font-family="Liberation Sans" font-size="66.84" font-weight="700" fill="#555e68" textLength="111.55" lengthAdjust="spacingAndGlyphs" >14k</text>
<path d="M1436.4,1220.4 L1463.6,1247.6 M1463.6,1220.4 L1436.4,1247.6" stroke="#959da5" stroke-width="5.4"/>
<rect x="1489" y="1236" width="398" height="298" fill="none" rx="4" stroke="#d5d9de" stroke-width="2" stroke-dasharray="6 4"/>
<rect x="1531" y="1278.5" width="314" height="68.0" fill="#fff" rx="6" stroke="#d3d7dc" stroke-width="2" />
<polygon points="1813,1307 1828,1307 1820.5,1318" fill="#2a3038"/>
<text x="1552.40" y="1324.3" font-family="Liberation Sans" font-size="30.72" font-weight="400" fill="#2a3038" textLength="212.22" lengthAdjust="spacingAndGlyphs" >Shares, Likes …</text>
<text x="1669.34" y="1420" font-family="Liberation Sans" font-size="66.84" font-weight="700" fill="#555e68" textLength="38.46" lengthAdjust="spacingAndGlyphs" >0</text>
<path d="M1876.4,1220.4 L1903.6,1247.6 M1903.6,1220.4 L1876.4,1247.6" stroke="#959da5" stroke-width="5.4"/>
<rect x="1929" y="1236" width="398" height="298" fill="none" rx="4" stroke="#d5d9de" stroke-width="2" stroke-dasharray="6 4"/>
<rect x="1971" y="1278.5" width="314" height="68.0" fill="#fff" rx="6" stroke="#d3d7dc" stroke-width="2" />
<polygon points="2253,1307 2268,1307 2260.5,1318" fill="#2a3038"/>
<text x="1992.56" y="1324.3" font-family="Liberation Sans" font-size="30.72" font-weight="400" fill="#2a3038" textLength="137.04" lengthAdjust="spacingAndGlyphs" >New Posts</text>
<text x="2107.77" y="1420" font-family="Liberation Sans" font-size="66.84" font-weight="700" fill="#555e68" textLength="39.73" lengthAdjust="spacingAndGlyphs" >0</text>
<path d="M2316.4,1220.4 L2343.6,1247.6 M2343.6,1220.4 L2316.4,1247.6" stroke="#959da5" stroke-width="5.4"/>
<text x="1953.64" y="1642" font-family="Liberation Sans" font-size="30.44" font-weight="400" fill="#2a3038" textLength="174.49" lengthAdjust="spacingAndGlyphs" >Listings Sort:</text>
<rect x="2148" y="1596.6" width="236.30000000000018" height="67.60000000000014" fill="#fff" rx="6" stroke="#d3d7dc" stroke-width="2" />
<polygon points="2352,1625 2367,1625 2359.5,1636" fill="#2a3038"/>
<text x="2168.82" y="1642" font-family="Liberation Sans" font-size="30.72" font-weight="400" fill="#2a3038" textLength="146.95" lengthAdjust="spacingAndGlyphs" >Page Views</text>
<rect x="111" y="1726.5" width="2274.5" height="160.5" fill="#f6f7f9" />
<path d="M111.8,2262 L111.8,1731 Q111.8,1727 115.8,1727 L2380.8,1727 Q2384.8,1727 2384.8,1731 L2384.8,2262" fill="none" stroke="#d5d9de" stroke-width="2" stroke-dasharray="6 4"/>
<text x="152.42" y="1821" font-family="Liberation Sans" font-size="36.27" font-weight="400" fill="#2a3038" textLength="59.57" lengthAdjust="spacingAndGlyphs" >Top</text>
<rect x="221" y="1769.3" width="356.5" height="76.20000000000005" fill="#fff" rx="6" stroke="#d3d7dc" stroke-width="2" />
<polygon points="545,1802 560,1802 552.5,1813" fill="#2a3038"/>
<text x="242.32" y="1821" font-family="Liberation Sans" font-size="36.27" font-weight="400" fill="#2a3038" textLength="85.75" lengthAdjust="spacingAndGlyphs" >Posts</text>
<path d="M2309.2,1788.8 L2338.2,1817.8 M2338.2,1788.8 L2309.2,1817.8" stroke="#959da5" stroke-width="5.2"/>
<text x="1955.61" y="1935.7" font-family="Liberation Sans" font-size="27.02" font-weight="400" fill="#8f99a4" textLength="87.81" lengthAdjust="spacingAndGlyphs" >Context</text>
<text x="2197.82" y="1935.7" font-family="Liberation Sans" font-size="27.02" font-weight="400" fill="#8f99a4" textLength="126.43" lengthAdjust="spacingAndGlyphs" >Page Views</text>
<rect x="344" y="1953.5" width="1979.5" height="2" fill="#e6e8ea" />
<text x="168.48" y="1988" font-family="Liberation Sans" font-size="30.58" font-weight="400" fill="#8f979f" textLength="13.50" lengthAdjust="spacingAndGlyphs" >1</text>
<text x="343.70" y="1988.6" font-family="Liberation Sans" font-size="29.30" font-weight="400" fill="#2a3038" textLength="898.23" lengthAdjust="spacingAndGlyphs" >Meet The People Solving Digital Content Creators’ Biggest Problems</text>
<path d="M1260,1971 L1251.5,1971 L1251.5,1992.5 L1274,1992.5 L1274,1984.5" fill="none" stroke="#8f979f" stroke-width="3.2" stroke-linejoin="round" stroke-linecap="round"/>
<path d="M1261.5,1983 L1276.5,1968  M1266,1968 L1276.5,1968 L1276.5,1978.5" fill="none" stroke="#8f979f" stroke-width="3.2" stroke-linejoin="round" stroke-linecap="round"/>
<text x="344.71" y="2041.3" font-family="Liberation Sans" font-size="27.88" font-weight="400" fill="#8f99a4" textLength="150.06" lengthAdjust="spacingAndGlyphs" >Sep 17, 2018</text>
<text x="520.55" y="2041.3" font-family="Liberation Sans" font-size="27.88" font-weight="400" fill="#8f99a4" textLength="142.85" lengthAdjust="spacingAndGlyphs" >clareondrey</text>
<text x="693.80" y="2041.3" font-family="Liberation Sans" font-size="27.88" font-weight="400" fill="#8f99a4" textLength="175.12" lengthAdjust="spacingAndGlyphs" >Uncategorized</text>
<text x="894.64" y="2041.3" font-family="Liberation Sans" font-size="27.88" font-weight="400" fill="#8f99a4" textLength="318.78" lengthAdjust="spacingAndGlyphs" >demoaccount.parsely.com</text>
<rect x="1239.4" y="2012" width="286.39999999999986" height="37.5" fill="#eaf6f0" rx="6" />
<path d="M1443.0,2012 L1519.8,2012 Q1525.8,2012 1525.8,2018 L1525.8,2043.5 Q1525.8,2049.5 1519.8,2049.5 L1443.0,2049.5 Z" fill="#c6ecd6"/>
<circle cx="1261.9" cy="2031" r="7" fill="none" stroke="#8a949c" stroke-width="2.2"/>
<circle cx="1261.9" cy="2031" r="2" fill="#8a949c"/>
<text x="1284.73" y="2038.2" font-family="Liberation Sans" font-size="18.77" font-weight="400" fill="#8a949c" textLength="147.34" lengthAdjust="spacing" stroke="#8a949c" stroke-width="0.45">BLOG.PARSE.LY</text>
<text x="1454.52" y="2038.2" font-family="Liberation Sans" font-size="18.77" font-weight="400" fill="#8a949c" textLength="59.62" lengthAdjust="spacing" stroke="#8a949c" stroke-width="0.45">25.9%</text>
<path d="M346.41,2081.27 A10.6,10.6 0 0 1 356.26,2070.33" fill="none" stroke="#2f3a44" stroke-width="2.3"/>
<polygon points="359.75,2070.08 356.04,2067.13 356.48,2073.52" fill="#2f3a44"/>
<path d="M361.98,2071.54 A10.6,10.6 0 0 1 366.53,2085.55" fill="none" stroke="#2f3a44" stroke-width="2.3"/>
<polygon points="364.99,2088.69 369.40,2086.95 363.65,2084.14" fill="#2f3a44"/>
<path d="M362.62,2089.89 A10.6,10.6 0 0 1 348.21,2086.83" fill="none" stroke="#2f3a44" stroke-width="2.3"/>
<polygon points="346.26,2083.93 345.56,2088.62 350.87,2085.04" fill="#2f3a44"/>
<text x="379.43" y="2088.8" font-family="Liberation Sans" font-size="24.75" font-weight="400" fill="#3c4651" textLength="177.24" lengthAdjust="spacingAndGlyphs" >Syndicated from</text>
<text x="566.63" y="2088.8" font-family="Liberation Sans" font-size="24.75" font-weight="400" fill="#8f99a4" textLength="286.85" lengthAdjust="spacingAndGlyphs" >demoaccount.parsely.com</text>
<line x1="567.4" y1="2093.5" x2="852.2" y2="2093.5" stroke="#a9b1b9" stroke-width="1.6" stroke-dasharray="2 2"/>
<rect x="866.2" y="2070" width="1.7" height="23" fill="#3c4651" />
<text x="880.07" y="2088.8" font-family="Liberation Sans" font-size="24.75" font-weight="400" fill="#8f99a4" textLength="67.56" lengthAdjust="spacingAndGlyphs" >3 sites</text>
<line x1="880.8" y1="2093.5" x2="946.9" y2="2093.5" stroke="#a9b1b9" stroke-width="1.6" stroke-dasharray="2 2"/>
<text x="1899.95" y="2001" font-family="Liberation Sans" font-size="32.71" font-weight="400" fill="#2a3038" textLength="56.09" lengthAdjust="spacingAndGlyphs" >1.6k</text>
<text x="1964.00" y="2001" font-family="Liberation Sans" font-size="24.18" font-weight="400" fill="#2a3038" textLength="82.63" lengthAdjust="spacingAndGlyphs" >visitors</text>
<text x="1899.05" y="2076.4" font-family="Liberation Sans" font-size="32.71" font-weight="400" fill="#2a3038" textLength="59.18" lengthAdjust="spacingAndGlyphs" >0:33</text>
<text x="1964.19" y="2076.4" font-family="Liberation Sans" font-size="24.18" font-weight="400" fill="#2a3038" textLength="104.86" lengthAdjust="spacingAndGlyphs" >avg. time</text>
<text x="2228.63" y="2039.8" font-family="Liberation Sans" font-size="41.24" font-weight="400" fill="#2a3038" textLength="94.70" lengthAdjust="spacingAndGlyphs" >1,676</text>
<rect x="344" y="2110.5" width="1979.5" height="2" fill="#e6e8ea" />
<text x="166.70" y="2145" font-family="Liberation Sans" font-size="30.58" font-weight="400" fill="#8f979f" textLength="15.42" lengthAdjust="spacingAndGlyphs" >2</text>
<text x="343.71" y="2145.6" font-family="Liberation Sans" font-size="29.30" font-weight="400" fill="#2a3038" textLength="553.99" lengthAdjust="spacingAndGlyphs" >Define The Jargon: Audience Engagement</text>
<path d="M917,2128 L908.5,2128 L908.5,2149.5 L931,2149.5 L931,2141.5" fill="none" stroke="#8f979f" stroke-width="3.2" stroke-linejoin="round" stroke-linecap="round"/>
<path d="M918.5,2140 L933.5,2125  M923,2125 L933.5,2125 L933.5,2135.5" fill="none" stroke="#8f979f" stroke-width="3.2" stroke-linejoin="round" stroke-linecap="round"/>
<text x="343.50" y="2198.3" font-family="Liberation Sans" font-size="27.88" font-weight="400" fill="#8f99a4" textLength="152.13" lengthAdjust="spacingAndGlyphs" >Nov 15, 2016</text>
<text x="521.94" y="2198.3" font-family="Liberation Sans" font-size="27.88" font-weight="400" fill="#8f99a4" textLength="143.66" lengthAdjust="spacingAndGlyphs" >clareondrey</text>
<text x="696.31" y="2198.3" font-family="Liberation Sans" font-size="27.88" font-weight="400" fill="#8f99a4" textLength="173.95" lengthAdjust="spacingAndGlyphs" >Uncategorized</text>
<text x="896.94" y="2198.3" font-family="Liberation Sans" font-size="27.88" font-weight="400" fill="#8f99a4" textLength="317.77" lengthAdjust="spacingAndGlyphs" >demoaccount.parsely.com</text>
<rect x="1241.5" y="2169" width="286.0999999999999" height="37.5" fill="#eaf6f0" rx="6" />
<path d="M1445.1,2169 L1521.6,2169 Q1527.6,2169 1527.6,2175 L1527.6,2200.5 Q1527.6,2206.5 1521.6,2206.5 L1445.1,2206.5 Z" fill="#c6ecd6"/>
<circle cx="1264.0" cy="2188" r="7" fill="none" stroke="#8a949c" stroke-width="2.2"/>
<circle cx="1264.0" cy="2188" r="2" fill="#8a949c"/>
<text x="1286.83" y="2195.2" font-family="Liberation Sans" font-size="18.77" font-weight="400" fill="#8a949c" textLength="147.34" lengthAdjust="spacing" stroke="#8a949c" stroke-width="0.45">BLOG.PARSE.LY</text>
<text x="1456.62" y="2195.2" font-family="Liberation Sans" font-size="18.77" font-weight="400" fill="#8a949c" textLength="59.62" lengthAdjust="spacing" stroke="#8a949c" stroke-width="0.45">27.4%</text>
<path d="M346.41,2238.27 A10.6,10.6 0 0 1 356.26,2227.33" fill="none" stroke="#2f3a44" stroke-width="2.3"/>
<polygon points="359.75,2227.08 356.04,2224.13 356.48,2230.52" fill="#2f3a44"/>
<path d="M361.98,2228.54 A10.6,10.6 0 0 1 366.53,2242.55" fill="none" stroke="#2f3a44" stroke-width="2.3"/>
<polygon points="364.99,2245.69 369.40,2243.95 363.65,2241.14" fill="#2f3a44"/>
<path d="M362.62,2246.89 A10.6,10.6 0 0 1 348.21,2243.83" fill="none" stroke="#2f3a44" stroke-width="2.3"/>
<polygon points="346.26,2240.93 345.56,2245.62 350.87,2242.04" fill="#2f3a44"/>
<text x="379.43" y="2245.8" font-family="Liberation Sans" font-size="24.75" font-weight="400" fill="#3c4651" textLength="177.24" lengthAdjust="spacingAndGlyphs" >Syndicated from</text>
<text x="566.63" y="2245.8" font-family="Liberation Sans" font-size="24.75" font-weight="400" fill="#8f99a4" textLength="286.85" lengthAdjust="spacingAndGlyphs" >demoaccount.parsely.com</text>
<line x1="567.4" y1="2250.5" x2="852.2" y2="2250.5" stroke="#a9b1b9" stroke-width="1.6" stroke-dasharray="2 2"/>
<rect x="866.2" y="2227" width="1.7" height="23" fill="#3c4651" />
<text x="880.07" y="2245.8" font-family="Liberation Sans" font-size="24.75" font-weight="400" fill="#8f99a4" textLength="67.56" lengthAdjust="spacingAndGlyphs" >3 sites</text>
<line x1="880.8" y1="2250.5" x2="946.9" y2="2250.5" stroke="#a9b1b9" stroke-width="1.6" stroke-dasharray="2 2"/>
<text x="1899.95" y="2158" font-family="Liberation Sans" font-size="32.71" font-weight="400" fill="#2a3038" textLength="56.09" lengthAdjust="spacingAndGlyphs" >1.5k</text>
<text x="1964.00" y="2158" font-family="Liberation Sans" font-size="24.18" font-weight="400" fill="#2a3038" textLength="82.63" lengthAdjust="spacingAndGlyphs" >visitors</text>
<text x="1899.05" y="2233.4" font-family="Liberation Sans" font-size="32.71" font-weight="400" fill="#2a3038" textLength="59.18" lengthAdjust="spacingAndGlyphs" >0:39</text>
<text x="1964.19" y="2233.4" font-family="Liberation Sans" font-size="24.18" font-weight="400" fill="#2a3038" textLength="104.86" lengthAdjust="spacingAndGlyphs" >avg. time</text>
<text x="2228.65" y="2196.8" font-family="Liberation Sans" font-size="41.24" font-weight="400" fill="#2a3038" textLength="94.09" lengthAdjust="spacingAndGlyphs" >1,560</text>
<defs><clipPath id="th1"><rect x="204" y="1954" width="100" height="100" rx="6"/></clipPath><clipPath id="th2"><rect x="204" y="2111" width="100" height="100" rx="6"/></clipPath><filter id="blur1" x="-10%" y="-10%" width="120%" height="120%"><feGaussianBlur stdDeviation="1.2"/></filter></defs>

<g clip-path="url(#th1)"><g filter="url(#blur1)">
<rect x="200" y="1950" width="110" height="110" fill="#d8dad8"/>
<!-- A: woman plaid -->
<rect x="204" y="1954" width="29" height="51" fill="#c9cccb"/>
<rect x="220" y="1968" width="13" height="16" fill="#3e403c"/>
<path d="M204,1984 L204,1962 Q206,1954 214,1955 Q222,1956 221,1966 L221,1984Z" fill="#5a3a2e"/>
<ellipse cx="212" cy="1969" rx="6.5" ry="11" fill="#dcb4a4"/>
<path d="M204,2005 L204,1986 Q212,1981 222,1983 Q230,1986 233,1992 L233,2005Z" fill="#a81e2a"/>
<path d="M206,1988 h4 v4 h-4z M214,1992 h4 v4 h-4z M222,1988 h4 v4 h-4z M206,1996 h4 v4 h-4z M222,1996 h4 v4 h-4z M218,2000 h4 v4 h-4z M210,2000 h4 v4 h-4z" fill="#2a1416"/>
<!-- B: man beard -->
<rect x="233" y="1954" width="46" height="51" fill="#c3a06e"/>
<rect x="233" y="1954" width="7" height="51" fill="#7e5a3c"/>
<ellipse cx="255" cy="1973" rx="8.5" ry="11" fill="#c08a6e"/>
<path d="M245,1976 Q243,1957 255,1956 Q268,1957 265,1976 L263,1966 Q255,1962 247,1966Z" fill="#2a1e18"/>
<path d="M248,1978 Q255,1988 262,1978 L262,1982 Q255,1990 248,1982Z" fill="#4a3325"/>
<path d="M234,2005 Q236,1988 247,1985 Q255,1988 264,1985 Q278,1988 279,2005Z" fill="#18181a"/>
<!-- C: man glasses -->
<rect x="279" y="1954" width="25" height="51" fill="#d2d6d5"/>
<rect x="279" y="1972" width="12" height="14" fill="#586458"/>
<ellipse cx="298.5" cy="1970" rx="7" ry="11.5" fill="#dcc0b0"/>
<rect x="291" y="1967" width="14" height="2.5" fill="#3a3a3a"/>
<path d="M282,2005 Q283,1986 296,1983 Q304,1984 306,2005Z" fill="#151515"/>
<!-- D: man blue polo -->
<rect x="204" y="2005" width="24.3" height="49" fill="#d8dcdc"/>
<ellipse cx="212" cy="2022" rx="9" ry="12.5" fill="#e6c4ae"/>
<path d="M204,2054 L204,2034 Q214,2030 224,2036 Q228,2040 228.3,2054Z" fill="#a4dcea"/>
<!-- E: woman white -->
<rect x="228.3" y="2005" width="50" height="49" fill="#7a8a6a"/>
<rect x="256" y="2005" width="22.3" height="8" fill="#e8ecee"/>
<rect x="262" y="2012" width="16.3" height="22" fill="#5d7258"/>
<path d="M239,2040 Q236,2010 251,2008 Q265,2010 262,2040 L257,2034 L257,2020 L245,2020 L245,2034Z" fill="#6a4430"/>
<ellipse cx="251.5" cy="2022" rx="6.5" ry="8" fill="#d0a088"/>
<path d="M238,2054 Q240,2036 251,2033 Q262,2036 269,2054Z" fill="#f2f2f0"/>
<!-- F: man beard plaid -->
<rect x="278.3" y="2005" width="25.7" height="49" fill="#dcdedc"/>
<ellipse cx="297" cy="2024" rx="8" ry="12" fill="#d8a88a"/>
<path d="M289,2016 Q296,2004 305,2014 L305,2018 L289,2020Z" fill="#b08850"/>
<path d="M289,2028 Q297,2040 305,2028 L305,2034 Q297,2042 289,2034Z" fill="#8a6642"/>
<path d="M278.3,2054 L278.3,2044 Q286,2037 297,2038 Q305,2038 306,2054Z" fill="#7c8284"/>
</g></g>


<g clip-path="url(#th2)"><g filter="url(#blur1)">
<rect x="200" y="2107" width="110" height="110" fill="#232b2e"/>
<rect x="200" y="2107" width="60" height="47" fill="#e6e8e8"/>
<rect x="200" y="2107" width="60" height="5" fill="#d3d8d8"/>
<rect x="200" y="2153" width="62" height="10" fill="#1f2a32"/>
<path d="M258,2150 Q270,2160 286,2166 Q300,2172 304,2196 L304,2217 L262,2217 Q256,2195 262,2180 Q256,2165 258,2150Z" fill="#5e423c"/>
<path d="M262,2160 Q275,2170 282,2180 Q290,2200 285,2217 L262,2217 Q256,2195 262,2180 Z" fill="#7a564a"/>
<ellipse cx="291" cy="2184" rx="6" ry="9" fill="#7a4e42"/>
<ellipse cx="291" cy="2185" rx="3" ry="6" fill="#241a1a"/>
<path d="M204,2162 Q225,2156 244,2166 Q258,2180 264,2196 Q250,2204 230,2202 Q212,2198 204,2192Z" fill="#dba898"/>
<path d="M210,2166 Q232,2162 248,2178 Q256,2188 258,2194" stroke="#f2d2c6" stroke-width="4" fill="none"/>
<path d="M204,2166 L214,2176 L208,2200 L200,2200Z" fill="#26313a"/>
<rect x="200" y="2200" width="56" height="12" fill="#a9a4a4"/>
<path d="M252,2196 L266,2190 L274,2217 L256,2217Z" fill="#2c3c52"/>
<path d="M268,2200 L282,2204 L286,2217 L272,2217Z" fill="#d8dde2"/>
</g></g>

</svg>
</body></html>
